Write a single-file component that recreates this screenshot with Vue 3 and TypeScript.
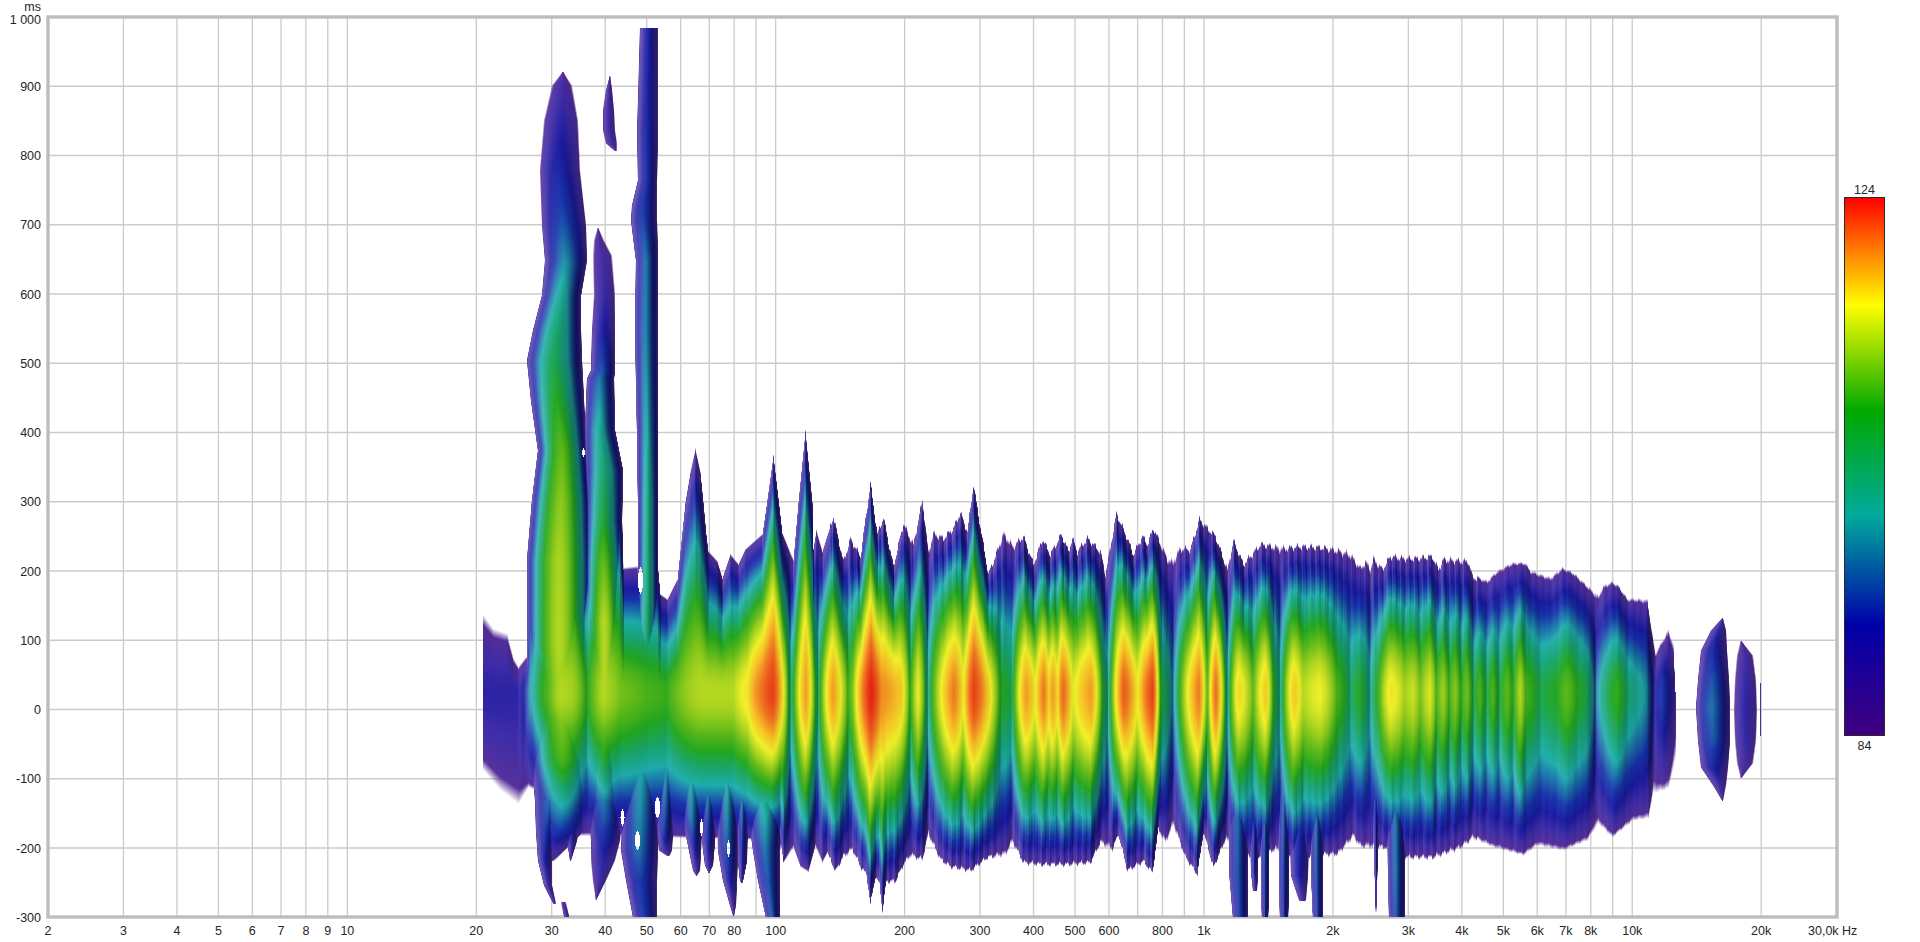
<script setup lang="ts">
import { onMounted, ref } from 'vue'

const PLOT = { left: 48, top: 17, right: 1837, bottom: 917 }
const W = PLOT.right - PLOT.left
const H = PLOT.bottom - PLOT.top

const fx = (f: number) => PLOT.left + 428.3 * Math.log10(f / 2)
const ty = (t: number) => 709.5 - 0.6925 * t

const freqLines = [3, 4, 5, 6, 7, 8, 9, 10, 20, 30, 40, 50, 60, 70, 80, 90, 100, 200, 300, 400, 500, 600, 700, 800, 900,
  1000, 2000, 3000, 4000, 5000, 6000, 7000, 8000, 9000, 10000, 20000].map(fx)
const timeLines = [900, 800, 700, 600, 500, 400, 300, 200, 100, 0, -100, -200].map(ty)

const freqLabels = [2, 3, 4, 5, 6, 7, 8, 9, 10, 20, 30, 40, 50, 60, 70, 80, 100, 200, 300, 400, 500, 600, 800,
  1000, 2000, 3000, 4000, 5000, 6000, 7000, 8000, 10000, 20000].map((f) => ({
  x: fx(f),
  text: f >= 1000 ? `${f / 1000}k` : `${f}`,
}))
const timeLabels = [900, 800, 700, 600, 500, 400, 300, 200, 100, 0, -100, -200, -300].map((t) => ({
  y: ty(t) + 4.5,
  text: `${t}`,
}))

const canvasEl = ref<HTMLCanvasElement | null>(null)

type Poly = number[]
function lerpPoly(p: Poly, x: number): number {
  if (x <= p[0]) return p[1]
  for (let i = 2; i < p.length; i += 2) {
    if (x <= p[i]) {
      const k = (x - p[i - 2]) / (p[i] - p[i - 2] || 1)
      return p[i - 1] + (p[i + 1] - p[i - 1]) * k
    }
  }
  return p[p.length - 1]
}
/* a little round on the crests, sharp in the valleys */
function crestPoly(p: Poly, x: number): number {
  if (x <= p[0]) return p[1]
  for (let i = 2; i < p.length; i += 2) {
    if (x <= p[i]) {
      const t = (x - p[i - 2]) / (p[i] - p[i - 2] || 1)
      const a = p[i - 1]
      const b = p[i + 1]
      const round = b > a ? b - (b - a) * (1 - t) * (1 - t) : a - (a - b) * t * t
      return (round + (a + (b - a) * t)) / 2
    }
  }
  return p[p.length - 1]
}

/* level measured at the centre row, screen x -> level */
const peak: Poly = [
  483, 87, 500, 87, 518, 87, 525, 89, 533, 95, 547, 102, 560, 107, 573, 106, 587, 100, 603, 107, 620, 104, 647, 102, 667, 101,
  690, 106, 700, 107, 733, 107, 747, 111, 760, 118, 772, 122, 783, 110, 788, 100, 790, 96, 793, 100, 805, 116, 815, 100, 818, 97,
  832, 116, 848, 101, 852, 104, 870, 124, 880, 117, 900, 113, 910, 100, 918, 110, 927, 95, 953, 118, 963, 110, 973, 122, 1000, 100,
  1012, 98, 1025, 116, 1035, 110, 1043, 118, 1048, 112, 1052, 116, 1057, 111, 1062, 119, 1073, 109, 1090, 116, 1102, 100, 1108, 95,
  1123, 120, 1137, 110, 1152, 122, 1160, 100, 1173, 92, 1198, 118, 1207, 102, 1215, 119, 1227, 94, 1238, 112, 1253, 103,
  1265, 113, 1273, 100, 1280, 95, 1293, 113, 1303, 107, 1320, 110, 1337, 102, 1350, 97, 1360, 100, 1370, 95, 1377, 100,
  1390, 111, 1398, 109, 1404, 106, 1413, 108, 1420, 104, 1430, 109, 1436, 102, 1443, 106, 1449, 101, 1455, 105, 1461, 100,
  1467, 104, 1473, 98, 1480, 102, 1486, 98, 1493, 102, 1499, 98, 1507, 103, 1513, 100, 1520, 107, 1525, 102, 1530, 101,
  1540, 98, 1547, 99, 1557, 100, 1567, 103, 1577, 100, 1587, 98, 1595, 91, 1603, 96, 1617, 101, 1627, 97, 1637, 95,
  1647, 93, 1653, 87, 1663, 90, 1675, 85,
]

const skyline: Poly = [
  483, 614, 493, 628, 507, 633, 513, 657, 518, 666, 525, 657, 527, 655, 530, 560, 560, 480, 575, 480, 584, 560, 590, 520,
  605, 480, 620, 490, 623, 567, 640, 565, 658, 570, 660, 593, 667, 598, 677, 578, 685, 500, 690, 470, 695, 447, 700, 470,
  703, 500, 706, 533, 708, 550, 717, 560, 722, 577, 730, 553, 738, 563, 745, 548, 762, 533, 766, 505, 773, 454, 779, 505,
  782, 532, 793, 558, 798, 500, 805, 429, 812, 500, 813, 547, 816, 528, 822, 550, 833, 515, 843, 560, 850, 537, 860, 555,
  870, 482, 877, 533, 883, 516, 893, 565, 903, 522, 913, 543, 922, 498, 928, 550, 933, 532, 943, 537, 953, 527, 960, 511,
  967, 530, 973, 483, 982, 538, 988, 573, 993, 560, 1003, 532, 1013, 545, 1023, 535, 1033, 563, 1042, 538, 1050, 553,
  1061, 533, 1068, 550, 1072, 537, 1077, 550, 1087, 537, 1100, 550, 1105, 572, 1116, 512, 1126, 535, 1133, 553, 1142, 535,
  1147, 543, 1153, 527, 1167, 557, 1172, 560, 1180, 547, 1190, 548, 1199, 518, 1215, 535, 1227, 568, 1233, 539, 1243, 563,
  1260, 543, 1285, 547, 1300, 545, 1320, 546, 1337, 549, 1350, 553, 1360, 567, 1365, 560, 1370, 567, 1373, 557, 1382, 568,
  1390, 555, 1402, 557, 1415, 557, 1432, 555, 1438, 568, 1443, 558, 1468, 560, 1472, 575, 1487, 580, 1497, 570, 1512, 562,
  1525, 562, 1530, 570, 1550, 577, 1562, 567, 1573, 572, 1590, 588, 1598, 595, 1603, 585, 1612, 581, 1618, 585, 1627, 598,
  1635, 598, 1647, 599, 1650, 620, 1655, 652, 1668, 629, 1673, 643, 1676, 717,
]

const floorline: Poly = [
  483, 770, 500, 790, 518, 804, 528, 787, 535, 790, 560, 835, 780, 840, 783, 863, 793, 848, 800, 867, 808, 872, 815, 847,
  822, 863, 827, 853, 835, 872, 843, 857, 852, 850, 860, 867, 866, 875, 870, 905, 875, 877, 879, 885, 882, 912, 886, 882,
  895, 882, 903, 865, 910, 856, 922, 860, 928, 835, 940, 860, 950, 867, 970, 871, 987, 858, 1005, 855, 1012, 842, 1023, 863,
  1040, 865, 1067, 865, 1090, 863, 1100, 843, 1112, 850, 1118, 835, 1127, 871, 1143, 862, 1152, 873, 1158, 830, 1165, 843,
  1173, 825, 1185, 858, 1197, 875, 1203, 833, 1213, 868, 1225, 840, 1235, 850, 1252, 860, 1275, 850, 1295, 862, 1310, 858,
  1323, 855, 1337, 855, 1353, 837, 1360, 847, 1385, 848, 1407, 858, 1433, 858, 1460, 848, 1473, 838, 1493, 847, 1523, 855,
  1537, 845, 1563, 850, 1587, 840, 1598, 823, 1612, 837, 1623, 828, 1633, 820, 1648, 818, 1653, 793, 1668, 788, 1675, 760, 1676, 717,
]

/* free-standing columns: rows of [y, left edge, right edge, level] */
const columns: number[][][] = [
  // 30 Hz
  [[71, 562, 563, 84.5], [85, 551, 572, 85.5], [120, 543, 578, 87], [170, 539, 580, 89], [225, 541, 586, 91], [260, 544, 587, 93],
    [295, 541, 581, 95], [330, 532, 581, 97], [360, 526, 582, 98], [400, 530, 584, 100], [450, 537, 586, 103], [500, 531, 590, 105],
    [560, 526, 592, 106.5], [640, 526, 592, 107], [700, 527, 595, 106], [760, 530, 595, 102], [800, 534, 592, 95], [830, 535, 585, 90], [850, 540, 565, 86], [860, 545, 555, 84.5]],
  // tail under 30 Hz
  [[800, 534, 565, 92], [830, 535, 556, 90], [860, 537, 552, 88], [885, 543, 552, 86], [903, 552, 556, 84.6]],
  [[902, 560, 566, 84.6], [916, 563, 569, 85.5]],
  [[770, 561, 583, 94], [810, 561, 581, 91], [840, 566, 577, 87], [860, 569, 571, 84.5]],
  // 40 Hz
  [[227, 597, 598, 84.5], [240, 593, 604, 85], [255, 592, 612, 85.5], [295, 593, 615, 86.5], [330, 591, 615, 88], [370, 590, 615, 91],
    [378, 586, 614, 92], [430, 584, 615, 95], [470, 584, 623, 97], [520, 584, 622, 99], [560, 584, 623, 103], [620, 584, 624, 107],
    [700, 584, 625, 107], [770, 584, 625, 98], [800, 585, 624, 92.5]],
  [[790, 585, 623, 93], [820, 588, 622, 91], [840, 590, 620, 89], [860, 590, 615, 87], [880, 592, 606, 86], [900, 595, 596, 84.5]],
  // floating piece at 42 Hz
  [[75, 609, 610, 84.5], [90, 605, 612, 85.5], [110, 602, 614, 86], [130, 602, 615, 86], [143, 605, 617, 85.5], [150, 613, 617, 84.5]],
  // 50 Hz
  [[28, 639, 658, 88.5], [100, 637, 658, 88.5], [130, 636, 658, 89], [180, 637, 657, 89.5], [205, 631, 657, 90], [220, 630, 657, 90.5],
    [260, 635, 658, 92], [330, 634, 658, 92.5], [430, 636, 658, 94], [500, 637, 658, 96], [590, 637, 658, 97], [660, 632, 660, 97]],
  [[760, 623, 660, 94], [850, 620, 658, 92], [880, 625, 657, 90], [917, 632, 657, 90]],
  // fingers under the low end
  [[760, 658, 675, 94], [830, 656, 673, 90], [850, 658, 672, 86], [855, 665, 670, 84.5]],
  [[750, 677, 704, 96], [820, 682, 702, 92], [850, 688, 701, 88], [870, 692, 700, 85.5], [875, 695, 697, 84.5]],
  [[760, 700, 716, 95], [840, 701, 715, 89], [865, 704, 713, 86], [873, 708, 709, 84.5]],
  [[770, 716, 738, 95], [850, 717, 738, 91], [880, 722, 737, 88], [905, 729, 736, 85.5], [915, 732, 734, 84.5]],
  [[780, 736, 748, 94], [860, 737, 747, 88], [880, 739, 743, 85.5], [883, 741, 742, 84.5]],
  [[780, 748, 782, 97], [820, 748, 782, 94], [850, 752, 780, 92], [880, 757, 780, 91], [917, 765, 780, 91]],
  // fingers under 1-3 kHz
  [[790, 1228, 1248, 92], [870, 1228, 1248, 91], [917, 1232, 1248, 90]],
  [[790, 1249, 1258, 91], [870, 1250, 1258, 88], [890, 1252, 1257, 85]],
  [[790, 1260, 1269, 92], [870, 1260, 1269, 90], [917, 1261, 1268, 90]],
  [[790, 1278, 1289, 92], [870, 1278, 1289, 90], [917, 1279, 1288, 90]],
  [[790, 1288, 1310, 91], [875, 1290, 1308, 88], [900, 1298, 1306, 85]],
  [[790, 1310, 1323, 92], [870, 1310, 1323, 91], [917, 1312, 1323, 90]],
  [[800, 1372, 1378, 90], [880, 1374, 1377, 87], [913, 1375, 1376, 84.5]],
  [[790, 1386, 1405, 92], [870, 1387, 1405, 92], [917, 1388, 1405, 91]],
  // two islands past 12 kHz
  [[618, 1721, 1723, 84.5], [630, 1710, 1726, 87], [650, 1700, 1727, 89], [680, 1697, 1729, 91], [707, 1695, 1730, 92], [740, 1697, 1730, 91],
    [767, 1700, 1728, 88.5], [785, 1712, 1726, 86], [800, 1721, 1723, 84.5]],
  [[640, 1740, 1741, 84.5], [655, 1736, 1753, 85.5], [680, 1734, 1756, 86.5], [710, 1733, 1757, 87], [740, 1734, 1756, 86.5],
    [763, 1736, 1753, 85.5], [778, 1740, 1741, 84.5]],
  [[683, 1759, 1761, 85], [735, 1759, 1761, 85]],
]

/* small white gaps inside the low end: cx, cy, rx, ry */
const gaps = [
  [583, 452, 1.5, 4], [622, 817, 2, 8], [637, 840, 2.5, 9], [657, 807, 2.5, 10], [640, 580, 2.5, 13], [701, 827, 1.5, 8], [728, 848, 1.5, 8],
]

const stops: [number, number, number, number][] = [
  [84, 92, 48, 150], [86, 62, 44, 168], [88, 26, 26, 160], [90, 22, 50, 170], [94, 30, 172, 172], [97, 24, 165, 110],
  [100, 34, 166, 30], [103, 92, 184, 24], [106, 160, 208, 30], [110, 240, 240, 40], [114, 246, 190, 36], [118, 240, 120, 32], [124, 230, 32, 16],
]
function colorAt(l: number): [number, number, number] {
  if (l <= stops[0][0]) return [stops[0][1], stops[0][2], stops[0][3]]
  for (let i = 1; i < stops.length; i++) {
    if (l <= stops[i][0]) {
      const a = stops[i - 1]
      const b = stops[i]
      const k = (l - a[0]) / (b[0] - a[0])
      return [a[1] + (b[1] - a[1]) * k, a[2] + (b[2] - a[2]) * k, a[3] + (b[3] - a[3]) * k]
    }
  }
  const e = stops[stops.length - 1]
  return [e[1], e[2], e[3]]
}

function render(canvas: HTMLCanvasElement) {
  const ctx = canvas.getContext('2d')
  if (!ctx) return
  const lev = new Float32Array(W * H)
  const put = (x: number, y: number, l: number) => {
    const px = x - PLOT.left
    const py = y - PLOT.top
    if (px < 0 || py < 0 || px >= W || py >= H || x < 483) return
    const i = py * W + px
    if (l > lev[i]) lev[i] = l
  }

  const centre = 692
  const soft = 0.2
  const softMax = Math.sqrt(1 + soft * soft) - soft
  const fall = (v: number) => (Math.sqrt(v * v + soft * soft) - soft) / softMax
  for (let x = 483; x <= 1676; x++) {
    const a = (crestPoly(peak, x - 1) + crestPoly(peak, x) * 2 + crestPoly(peak, x + 1)) / 4
    const amp = x < 830 ? 0 : x < 1480 ? 1 : 0.35
    const ripple = amp * (2.4 * Math.sin(x * 0.9) + 1.2 * Math.sin(x * 2.3))
    const t = lerpPoly(skyline, x) + ripple
    const b = lerpPoly(floorline, x) + ripple * 0.7
    for (let y = Math.floor(t); y <= Math.ceil(b); y++) {
      const v = y < centre ? (centre - y) / (centre - t) : (y - centre) / (b - centre)
      put(x, y, 84 + (a - 84) * (1 - fall(Math.min(v, 1))))
    }
  }

  for (const rows of columns) {
    const ls: Poly = []
    const rs: Poly = []
    const ps: Poly = []
    for (const r of rows) {
      ls.push(r[0], r[1])
      rs.push(r[0], r[2])
      ps.push(r[0], r[3])
    }
    for (let y = rows[0][0]; y <= rows[rows.length - 1][0]; y++) {
      const l = lerpPoly(ls, y)
      const r = lerpPoly(rs, y)
      const p = lerpPoly(ps, y)
      const m = (l + r) / 2
      const hw = Math.max((r - l) / 2, 0.5)
      for (let x = Math.floor(l); x <= Math.ceil(r); x++) {
        const u = Math.abs(x - m) / hw
        if (u <= 1) put(x, y, 84 + (p - 84) * (1 - Math.pow(u, 1.7)))
      }
    }
  }

  for (const [cx, cy, rx, ry] of gaps) {
    for (let y = Math.floor(cy - ry); y <= cy + ry; y++) {
      for (let x = Math.floor(cx - rx); x <= cx + rx; x++) {
        const d = ((x - cx) / rx) ** 2 + ((y - cy) / ry) ** 2
        if (d <= 1) lev[(y - PLOT.top) * W + x - PLOT.left] = 0
      }
    }
  }

  const img = ctx.createImageData(W, H)
  const data = img.data
  for (let py = 0; py < H; py++) {
    for (let px = 1; px < W - 1; px++) {
      const i = py * W + px
      const l = lev[i]
      if (l <= 84) continue
      const lv = lev[i - 1] > 84 ? lev[i - 1] : l
      const rv = lev[i + 1] > 84 ? lev[i + 1] : l
      const s = Math.max(-1, Math.min(1, (rv - lv) / 1.4))
      const w = l < 92 ? 1 : l > 104 ? 0.08 : 1 - ((l - 92) / 12) * 0.92
      const c = colorAt(l)
      const k = s * w
      const o = i * 4
      for (let n = 0; n < 3; n++) {
        data[o + n] = k > 0 ? c[n] + (255 - c[n]) * k * 0.2 : c[n] * (1 + k * 0.42)
      }
      data[o + 3] = Math.min(1, (l - 84) / 0.5) * 255
    }
  }
  ctx.putImageData(img, 0, 0)
}

onMounted(() => {
  if (canvasEl.value) render(canvasEl.value)
})
</script>

<template>
  <div class="page">
    <div class="chart">
      <svg class="axes" width="1842" height="942" viewBox="0 0 1842 942">
        <g class="grid">
          <line v-for="x in freqLines" :key="`f${x}`" :x1="x" :x2="x" :y1="PLOT.top" :y2="PLOT.bottom" />
          <line v-for="y in timeLines" :key="`t${y}`" :x1="PLOT.left" :x2="PLOT.right" :y1="y" :y2="y" />
        </g>
        <rect class="frame" :x="PLOT.left" :y="PLOT.top" :width="W" :height="H" />
        <g class="labels">
          <text class="right" x="41" y="11">ms</text>
          <text class="right" x="41" y="23.5">1 000</text>
          <text v-for="l in timeLabels" :key="l.text" class="right" x="41" :y="l.y">{{ l.text }}</text>
          <text v-for="l in freqLabels" :key="l.text" class="mid" :x="l.x" y="935">{{ l.text }}</text>
          <text x="1808" y="935">30,0k Hz</text>
        </g>
      </svg>
      <canvas ref="canvasEl" class="waterfall" :width="W" :height="H"></canvas>
    </div>
    <aside class="legend">
      <span class="tick">124</span>
      <div class="bar"></div>
      <span class="tick">84</span>
    </aside>
  </div>
</template>

<style scoped>
.page {
  display: flex;
  width: 1920px;
  height: 942px;
  background: #fff;
  overflow: hidden;
  font-family: "Liberation Sans", Arial, sans-serif;
}
.chart {
  position: relative;
  flex: none;
  width: 1842px;
  height: 942px;
}
.axes {
  display: block;
  overflow: visible;
}
.grid line {
  stroke: #cbcbcb;
  stroke-width: 1.3;
}
.frame {
  fill: none;
  stroke: #bdbdbd;
  stroke-width: 3.4;
}
.labels text {
  font-size: 12.5px;
  fill: #262626;
}
.labels .right {
  text-anchor: end;
}
.labels .mid {
  text-anchor: middle;
}
.waterfall {
  position: absolute;
  left: 48px;
  top: 17px;
  filter: blur(0.5px);
}
.legend {
  display: flex;
  flex-direction: column;
  align-items: center;
  width: 43px;
  margin-left: 1px;
  padding-top: 183px;
}
.tick {
  font-size: 12.5px;
  line-height: 14px;
  color: #262626;
}
.bar {
  box-sizing: border-box;
  width: 41px;
  height: 539px;
  margin: 0 0 3px;
  border: 1px solid #2a2a2a;
  background: linear-gradient(
    to bottom,
    #ff0000 0%,
    #ffff00 20%,
    #00a800 39.6%,
    #00aa9c 59.2%,
    #0000a8 79.5%,
    #400080 100%
  );
}
</style>

<style>
body {
  margin: 0;
  background: #fff;
}
</style>
